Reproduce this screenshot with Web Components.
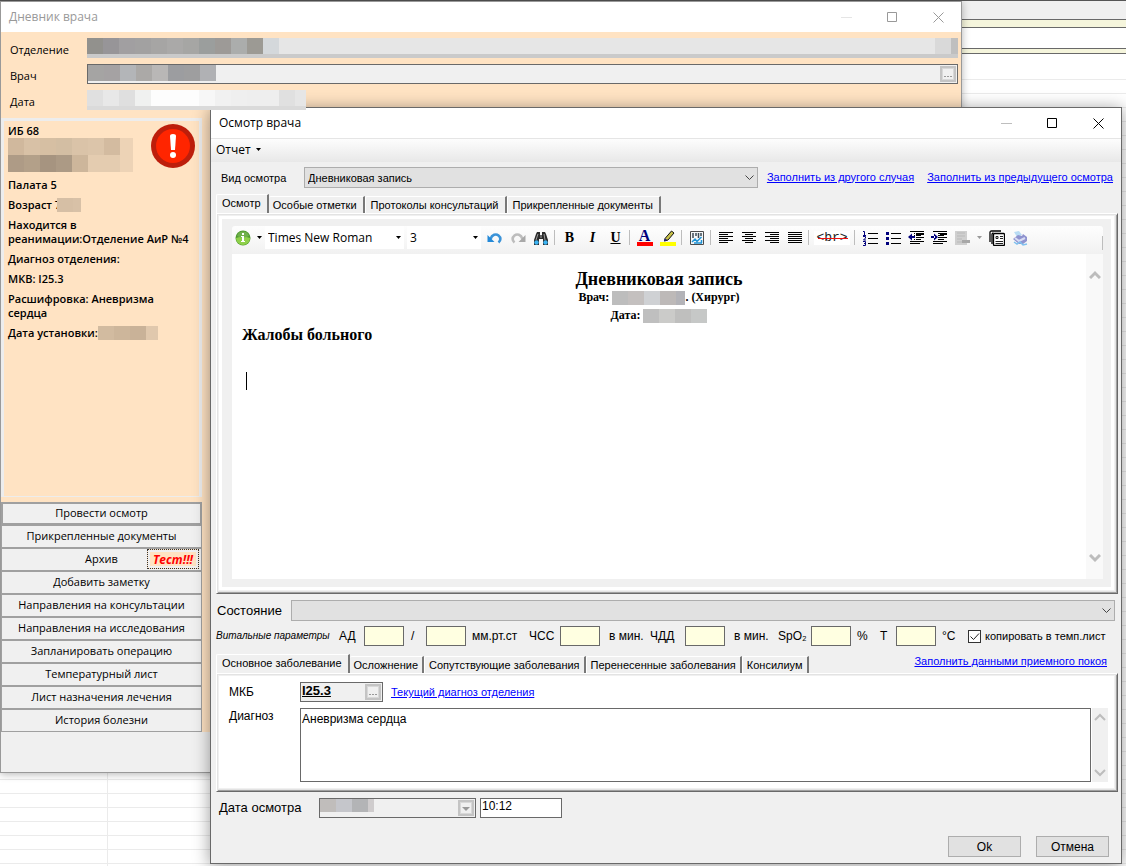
<!DOCTYPE html>
<html lang="ru">
<head>
<meta charset="utf-8">
<title>Осмотр врача</title>
<style>
	:root {
		--font-ui: "Open Sans", "Noto Sans", sans-serif;
		--font-form: "Liberation Sans", Arial, sans-serif;
		--font-doc: "Liberation Serif", "Times New Roman", serif;
		--surface: #f0f0f0;
		--peach: #ffe3c3;
		--line-dark: #696969;
		--line-mid: #a0a0a0;
		--line-soft: #adadad;
		--link: #0000ff;
	}
	html, body { height: 100%; margin: 0; }
	body { overflow: hidden; color: #000; }
</style>
</head>
<body>
<work-desk>
	<diary-window></diary-window>
	<exam-window></exam-window>
</work-desk>

<script>
const define = (name, html, setup) => {
	const template = document.createElement('template');
	template.innerHTML = html;
	customElements.define(name, class extends HTMLElement {
		constructor() {
			super();
			this.attachShadow({ mode: 'open' }).appendChild(template.content.cloneNode(true));
		}
		connectedCallback() {
			if (setup && !this.ready) {
				this.ready = true;
				setup(this, this.shadowRoot);
			}
		}
	});
};

const icons = {
	info: `<circle cx="8" cy="8" r="7.5" fill="#4e9a2e"/><path d="M1 8a7 7 0 0 0 14 0q-7-3-14 0z" fill="#8fd04a"/><path d="M2 6a6.3 6.3 0 0 1 12 0q-6 3-12 0z" fill="#6fb04c"/><rect x="7" y="3" width="2" height="2" fill="#fff"/><path d="M6 6h3v5h1v1H6v-1h1V7H6z" fill="#fff"/>`,
	undo: `<path d="M3.500 9C5 4.500 9 3.500 11.500 5.500s2.500 5 0 7" fill="none" stroke="#3b93d8" stroke-width="2.600"/><path d="M.5 5v7h7z" fill="#2489d8"/>`,
	redo: `<path d="M12.500 9C11 4.500 7 3.500 4.500 5.500s-2.500 5 0 7" fill="none" stroke="#bdbdbd" stroke-width="2.600"/><path d="M15.500 5v7h-7z" fill="#a9a9a9"/>`,
	find: `<path d="M4 2h3v3h2V2h3l1 2 2 6v5h-5V9H6v6H1v-5l2-6z" fill="#2b2b2b"/><path d="M5 4L3 10M11 4l1 6" stroke="#9a9a9a"/><circle cx="3.500" cy="12.500" r="2.200" fill="#3bb3f2"/><circle cx="12.500" cy="12.500" r="2.200" fill="#3bb3f2"/><path d="M7 5h2v3H7z" fill="#666"/>`,
	pen: `<path d="M5 8.500L11.500 1l2.500 2L8 10 4.500 11z" fill="#c9c24a" stroke="#111"/><path d="M4 11.500l1-3 2.500 1.500z" fill="#222080"/><path d="M0 12h16v4H0z" fill="#ff0"/>`,
	chart: `<path d="M1.500 1.500h13v13h-13z" fill="#f4f6f7" stroke="#4c4c4c"/><path d="M4 3v5M7 3v3M9.500 3v5M12 3v3" stroke="#3c4a55" stroke-width="1.500"/><path d="M3 12l3-3 2 2.500L12.500 7M12.500 10v3M5 13h8" fill="none" stroke="#1f93d6" stroke-width="1.500"/>`,
	left: `<path d="M1 2.500h14M1 4.500h9M1 6.500h14M1 8.500h9M1 10.500h14M1 12.500h9" stroke="#000"/>`,
	center: `<path d="M1 2.500h14M4 4.500h8M1 6.500h14M4 8.500h8M1 10.500h14M4 12.500h8" stroke="#000"/>`,
	right: `<path d="M1 2.500h14M6 4.500h9M1 6.500h14M6 8.500h9M1 10.500h14M6 12.500h9" stroke="#000"/>`,
	justify: `<path d="M1 2.500h14M1 4.500h14M1 6.500h14M1 8.500h14M1 10.500h14M1 12.500h14" stroke="#000"/>`,
	numbers: `<path d="M6 3.500h10M6 8.500h10M6 13.500h10" stroke="#000"/><path d="M1 1.500h1.500V5M1 5.500h3M1 6.500h2.500v1.500L1.500 10h2.500M1 11.500h2.500v4H1M2 13.500h1" fill="none" stroke="#00007c"/>`,
	bullets: `<path d="M6 3.500h10M6 8.500h10M6 13.500h10" stroke="#000"/><path d="M1 2h3v3H1zM1 7h3v3H1zM1 12h3v3H1z" fill="#00007c"/>`,
	outdent: `<path d="M2 1.500h14M8 3.500h8M8 5.500h5M8 7.500h8M8 9.500h5M2 11.500h14M2 13.500h10" stroke="#000"/><path d="M6.500 3v11" stroke="#000" stroke-dasharray="1 1"/><path d="M8 3h8v2H8zM8 7h5v1H8z"/><path d="M0 7l4-3.500v7zM3 6h4v2H3z" fill="#00007c"/>`,
	indent: `<path d="M2 1.500h14M8 3.500h8M8 5.500h5M8 7.500h8M8 9.500h5M2 11.500h14M2 13.500h10" stroke="#000"/><path d="M7.500 3v11" stroke="#000" stroke-dasharray="1 1"/><path d="M9 3h7v2H9zM9 7h4v1H9z"/><path d="M7 7L3 3.500v7zM0 6h4v2H0z" fill="#00007c"/>`,
	doc: `<path d="M1 1h12v14H1z" fill="#cfcfcf"/><path d="M3 3h8M3 6h8M3 9h5M3 12h5" stroke="#b9b9b9"/><path d="M8 10h8v3H8z" fill="#a8a8a8"/>`,
	copy: `<path d="M1 12V2.500Q1 1 2.500 1H12M3 14V4.500Q3 3 4.500 3" fill="none" stroke="#000" stroke-width="1.300"/><rect x="4.500" y="3.500" width="11" height="12" rx="1" fill="#fff" stroke="#000" stroke-width="1.300"/><path d="M7 6.500h2v2H7zM11 6.500h3M11 8.500h3M6.500 11.500H14M6.500 13.500H14" fill="none" stroke="#222"/>`,
	print: `<path d="M2 2l5-1 3 4-5 2z" fill="#b9dcf4"/><path d="M1 9l5-4 4 1 1-2 4 3v4l-4 3H7z" fill="#8f93cf"/><path d="M3 8l4 3 6-3" fill="none" stroke="#d9dcf4" stroke-width="2"/><path d="M2 12l3 2 3-2 3 3 4-1" fill="none" stroke="#7fc0ee" stroke-width="1.500"/>`
};

/* Row (or rows) of flat 16px cells that hides personal data */
define('blur-cells', `
	<style>
		:host { display: inline-block; vertical-align: middle; }
		div { display: flex; height: var(--cell-h, 16px); }
		i { width: 16px; }
		i:last-child { width: var(--last, 16px); }
	</style>
`, (el, root) => {
	el.getAttribute('colors').split('/').forEach(line => {
		const row = document.createElement('div');
		line.trim().split(' ').forEach(color => {
			const cell = document.createElement('i');
			cell.style.background = color;
			row.appendChild(cell);
		});
		root.appendChild(row);
	});
});

define('win-frame', `
	<style>
		:host {
			display: flex;
			flex-direction: column;
			box-sizing: border-box;
			border: 1px solid var(--line-dark);
			background: var(--surface);
		}
		header {
			display: flex;
			align-items: center;
			height: 30px;
			padding-left: 8px;
			background: #fff;
			font: 12px/16px var(--font-ui);
			color: var(--title-color, #000);
		}
		h1 { flex: 1; margin: 0; font: inherit; }
		button {
			display: grid;
			place-items: center;
			width: 46px;
			height: 30px;
			padding: 0;
			border: 0;
			background: none;
			color: inherit;
		}
		svg { width: 11px; height: 11px; fill: none; stroke: currentColor; }
		.min { opacity: .25; }
	</style>
	<header>
		<h1></h1>
		<button class="min" aria-label="Свернуть"><svg><path d="M0 5.500h11"/></svg></button>
		<button aria-label="Развернуть"><svg><path d="M.5.5h9v9h-9z"/></svg></button>
		<button aria-label="Закрыть"><svg><path d="M.5.5l10 10M10.500.5l-10 10"/></svg></button>
	</header>
	<slot></slot>
`, (el, root) => {
	root.querySelector('h1').textContent = el.getAttribute('caption');
});

/* Small grey square button inside read-only fields */
define('pick-button', `
	<style>
		:host { display: block; }
		button {
			display: grid;
			place-items: center;
			box-sizing: border-box;
			width: 16px;
			height: 16px;
			padding: 0;
			border: 2px solid #c4c4c4;
			outline: 1px solid #d8d8d8;
			outline-offset: -3px;
			background: var(--surface);
			color: var(--line-mid);
		}
	</style>
	<button aria-label="Выбрать"><svg width="10" height="10"></svg></button>
`, (el, root) => {
	root.querySelector('svg').innerHTML = el.hasAttribute('arrow')
		? '<path d="M1 4h8L5 8z" fill="#999"/>'
		: '<path d="M1 7h2v1H1zM4 7h2v1H4zM7 7h2v1H7z" fill="#999"/>';
});

define('labeled-select', `
	<style>
		:host {
			display: flex;
			align-items: center;
			font: var(--label-size, 11px)/14px var(--font-form);
		}
		label { width: var(--label-width, 83px); padding-left: var(--label-pad, 5px); box-sizing: border-box; }
		div { display: grid; flex: 1; align-items: center; }
		select, svg { grid-area: 1 / 1; }
		select {
			appearance: none;
			width: 100%;
			height: 21px;
			padding: 0 20px 0 3px;
			border: 1px solid var(--line-soft);
			border-radius: 0;
			background: #e1e1e1;
			color: #000;
			font: 11px/14px var(--font-form);
		}
		svg { justify-self: end; margin-right: 4px; pointer-events: none; }
	</style>
	<label for="list"></label>
	<div>
		<select id="list"><option></option></select>
		<svg width="9" height="6"><path d="M.5.5l4 4 4-4" fill="none" stroke="#444"/></svg>
	</div>
`, (el, root) => {
	root.querySelector('label').textContent = el.getAttribute('label');
	root.querySelector('option').textContent = el.getAttribute('value');
});

define('tab-set', `
	<style>
		:host { display: flex; flex-direction: column; }
		.strip { display: flex; align-items: flex-end; height: 19px; }
		.tabs { display: contents; }
		[role=tab] {
			height: 17px;
			padding: 0 var(--tab-end, 6px) 0 var(--tab-start, 5px);
			border: 0;
			border-top: 1px solid #fff;
			border-left: 1px solid #fff;
			border-right: 2px solid #787878;
			border-radius: 2px 0 0 0;
			background: var(--surface);
			color: #000;
			font: 11px/15px var(--font-form);
			white-space: nowrap;
		}
		[role=tab][aria-selected=true] { height: 20px; margin-bottom: -1px; padding: 0 6px 3px 5px; }
		[role=tab][aria-selected=true] + [role=tab] { padding-left: 4px; border-left: 0; }
		.aside { flex: 1; align-self: flex-start; text-align: right; padding-right: 11px; font: 11px/14px var(--font-form); }
		.page {
			display: flex;
			flex: 1;
			flex-direction: column;
			min-height: 0;
			box-sizing: border-box;
			border: 1px solid #fff;
			border-right: 1px solid var(--line-dark);
			border-bottom: 1px solid var(--line-dark);
			box-shadow: inset 1px 1px #e3e3e3, inset -1px -1px var(--line-mid), inset -2px -2px #e3e3e3;
			padding: 2px 3px 3px 2px;
		}
		.page > div { display: flex; flex: 1; flex-direction: column; min-height: 0; background: #fff; }
	</style>
	<div class="strip"><div class="tabs" role="tablist"></div><div class="aside"><slot name="aside"></slot></div></div>
	<div class="page" role="tabpanel"><div><slot></slot></div></div>
`, (el, root) => {
	const list = root.querySelector('.tabs');
	el.getAttribute('tabs').split('|').forEach((text, i) => {
		const tab = document.createElement('button');
		tab.setAttribute('role', 'tab');
		tab.setAttribute('aria-selected', i === 0);
		tab.textContent = text;
		list.appendChild(tab);
	});
	list.addEventListener('click', e => {
		if (e.target === list) return;
		list.querySelectorAll('button').forEach(tab => tab.setAttribute('aria-selected', tab === e.target));
	});
});

define('scroll-rail', `
	<style>
		:host { display: flex; flex-direction: column; justify-content: space-between; align-items: center; width: 17px; background: var(--rail, #f9f9f9); }
		svg { padding: var(--rail-pad, 16px) 0; fill: none; stroke: #bdbdbd; stroke-width: var(--rail-stroke, 3); }
	</style>
	<svg width="12" height="9"><path d="M1 8l5-5 5 5"/></svg>
	<svg width="12" height="9"><path d="M1 1l5 5 5-5"/></svg>
`);

define('editor-toolbar', `
	<style>
		:host {
			display: flex;
			align-items: center;
			height: 23px;
			padding-bottom: 5px;
			border-radius: 3px;
			background: linear-gradient(#fefefe, #f1f1f1);
		}
		button {
			display: grid;
			place-items: center;
			flex: none;
			width: 23px;
			height: 22px;
			padding: 0;
			border: 0;
			background: none;
			color: #000;
			font: bold 14px/16px var(--font-doc);
		}
		.first { width: 21px; }
		.drop { width: 12px; }
		.br { width: 40px; font: 13px/14px "Liberation Mono", monospace; }
		.br span { position: relative; padding: 0 2px; background: #fff; color: #222; }
		.br span::after { content: ""; position: absolute; left: 4px; right: 2px; top: 7px; height: 1px; background: #f01010; }
		.color { color: #00007c; font-size: 16px; line-height: 12px; }
		.color span { width: 16px; border-bottom: 4px solid #f00; }
		i.sep { flex: none; width: 1px; height: 15px; margin: 0 3px 0 2px; background: #bdbdbd; }
		.combo { display: grid; align-items: center; height: 23px; margin-right: 3px; background: #fff; }
		.combo.font { width: 139px; }
		.combo.size { width: 74px; margin-right: 2px; }
		.combo > * { grid-area: 1 / 1; }
		select { appearance: none; height: 23px; padding: 0 14px 0 3px; border: 0; background: none; color: #000; font: 12px/16px var(--font-ui); }
		.combo svg { justify-self: end; margin-right: 3px; pointer-events: none; }
		.end { width: 1px; height: 14px; margin: 10px 0 0 auto; background: #bdbdbd; }
	</style>
	<button class="first" data-icon="info" title="Информация"></button>
	<button class="drop" aria-label="Меню информации"><svg width="5" height="3"><path d="M0 0h5L2.500 3z"/></svg></button>
	<div class="combo font">
		<select aria-label="Шрифт"><option>Times New Roman</option></select>
		<svg width="5" height="3"><path d="M0 0h5L2.500 3z"/></svg>
	</div>
	<div class="combo size">
		<select aria-label="Размер"><option>3</option></select>
		<svg width="5" height="3"><path d="M0 0h5L2.500 3z"/></svg>
	</div>
	<button data-icon="undo" title="Отменить"></button>
	<button data-icon="redo" title="Вернуть"></button>
	<button data-icon="find" title="Найти"></button>
	<i class="sep"></i>
	<button>B</button>
	<button><em>I</em></button>
	<button><u>U</u></button>
	<i class="sep"></i>
	<button class="color" title="Цвет текста"><span>A</span></button>
	<button data-icon="pen" title="Цвет фона"></button>
	<i class="sep"></i>
	<button data-icon="chart" title="Изображение"></button>
	<i class="sep"></i>
	<button data-icon="left" title="По левому краю"></button>
	<button data-icon="center" title="По центру"></button>
	<button data-icon="right" title="По правому краю"></button>
	<button data-icon="justify" title="По ширине"></button>
	<i class="sep"></i>
	<button class="br"><span>&lt;br&gt;</span></button>
	<i class="sep"></i>
	<button data-icon="numbers" title="Нумерация"></button>
	<button data-icon="bullets" title="Маркеры"></button>
	<button data-icon="outdent" title="Уменьшить отступ"></button>
	<button data-icon="indent" title="Увеличить отступ"></button>
	<button data-icon="doc" title="Вставить"></button>
	<button class="drop" aria-label="Меню вставки"><svg width="5" height="3"><path d="M0 0h5L2.500 3z" fill="#999"/></svg></button>
	<button data-icon="copy" title="Копировать"></button>
	<button data-icon="print" title="Печать"></button>
	<i class="end"></i>
`, (el, root) => {
	root.querySelectorAll('[data-icon]').forEach(btn => {
		btn.innerHTML = `<svg width="16" height="16">${icons[btn.dataset.icon]}</svg>`;
	});
});

define('note-editor', `
	<style>
		:host { display: flex; flex: 1; flex-direction: column; min-height: 0; margin: 3px; padding: 7px 8px 8px 10px; background: var(--surface); }
		.area { display: flex; flex: 1; min-height: 0; background: #fff; }
		article { flex: 1; padding: 16px 10px 0; font: bold 12px/18px var(--font-doc); outline: 0; }
		h2, h3, p { margin: 0; text-align: center; }
		h2 { font-size: 18px; line-height: 18px; }
		h3 { margin-top: 2px; text-align: left; font-size: 16px; line-height: 18px; }
		.caret { width: 1px; height: 18px; margin: 28px 0 0 4px; background: #000; }
	</style>
	<editor-toolbar></editor-toolbar>
	<div class="area">
		<article>
			<h2>Дневниковая запись</h2>
			<p>Врач: <blur-cells style="--cell-h: 14px; --last: 9px" colors="#bdbdbd #c4c0bf #cfd1d4 #bdb9b8 #b3b3b8"></blur-cells>. (Хирург)</p>
			<p>Дата: <blur-cells style="--cell-h: 14px" colors="#bfbfbf #cbcbc9 #bfbfbe #c6c8c7"></blur-cells></p>
			<h3>Жалобы больного</h3>
			<div class="caret"></div>
		</article>
		<scroll-rail></scroll-rail>
	</div>
`);

define('vital-signs', `
	<style>
		:host {
			display: grid;
			grid-template-columns: 123px 25px 40px 22px 46px 57px 31px 49px 41px 35px 49px 44px 33px 46px 23px 16px 46px 26px auto;
			align-items: center;
			height: 20px;
			font: 12px/14px var(--font-form);
			white-space: nowrap;
		}
		em { font-size: 10px; }
		input:not([type]) { box-sizing: border-box; width: 40px; height: 20px; padding: 0 2px; border: 1px solid var(--line-dark); background: #ffffe1; font: inherit; }
		.slash { padding-left: 7px; }
		.copy { display: flex; align-items: center; gap: 4px; font-size: 11px; }
		.box { display: grid; }
		.box > * { grid-area: 1 / 1; }
		input[type=checkbox] { appearance: none; width: 13px; height: 13px; margin: 0; border: 1px solid #333; background: #fff; }
		svg { pointer-events: none; fill: none; stroke: #222; visibility: hidden; }
		:checked + svg { visibility: visible; }
	</style>
	<em>Витальные параметры</em>
	<label for="ad">АД</label><input id="ad">
	<label for="ad2" class="slash">/</label><input id="ad2">
	<span>мм.рт.ст</span>
	<label for="hr">ЧСС</label><input id="hr">
	<span>в мин.</span>
	<label for="rr">ЧДД</label><input id="rr">
	<span>в мин.</span>
	<label for="sp">SpO₂</label><input id="sp">
	<span>%</span>
	<label for="t">T</label><input id="t">
	<span>°C</span>
	<label class="copy"><span class="box"><input type="checkbox" checked><svg width="13" height="13"><path d="M2.500 6.500l3 3 5.500-6"/></svg></span>копировать в темп.лист</label>
`);

define('diagnosis-form', `
	<style>
		:host {
			display: grid;
			grid-template-columns: 72px 1fr;
			row-gap: 6px;
			padding: 6px 6px 6px 9px;
			font: 12px/16px var(--font-form);
		}
		label { padding-left: 1px; }
		.line { display: flex; align-items: center; gap: 8px; min-height: 20px; }
		.code { display: flex; align-items: center; box-sizing: border-box; width: 83px; height: 20px; padding-right: 1px; border: 1px solid var(--line-dark); background: var(--surface); }
		.code input { flex: 1; min-width: 0; height: 18px; padding: 0 1px 3px; box-sizing: border-box; border: 0; background: none; font: bold 13px/15px var(--font-form); text-decoration: underline; }
		a { color: var(--link); font-size: 11px; }
		.text { display: flex; gap: 1px; height: 74px; }
		textarea { flex: 1; box-sizing: border-box; margin: 0; padding: 2px 1px; border: 1px solid var(--line-dark); resize: none; overflow: hidden; font: 12px/16px var(--font-form); color: #000; }
		scroll-rail { width: 16px; --rail: #f0f0f0; --rail-pad: 4px; --rail-stroke: 2; }
	</style>
	<label class="line" for="mkb">МКБ</label>
	<div class="line">
		<span class="code"><input id="mkb" value="I25.3" readonly><pick-button></pick-button></span>
		<a href="#">Текущий диагноз отделения</a>
	</div>
	<label for="diag">Диагноз</label>
	<div class="text"><textarea id="diag">Аневризма сердца</textarea><scroll-rail></scroll-rail></div>
`);

define('exam-window', `
	<style>
		:host { position: absolute; z-index: 1; left: 210px; right: 4px; top: 107px; bottom: 2px; display: flex; box-shadow: 0 2px 16px rgba(0, 0, 0, .4); }
		win-frame { flex: 1; min-width: 0; }
		nav { height: 23px; border-top: 1px solid #e5e5e5; background: linear-gradient(#fdfdfd, #e8e8e8); }
		nav button { display: flex; align-items: center; gap: 4px; height: 22px; padding: 0 5px; border: 0; background: none; color: #000; font: 12px/16px var(--font-ui); }
		main { display: flex; flex: 1; flex-direction: column; min-height: 0; padding: 5px 3px 6px 5px; }
		.kind { display: flex; align-items: center; margin: 0 5px 6px 0; }
		.kind labeled-select { flex: 1; min-width: 0; --label-width: 88px; }
		.links { display: flex; gap: 13px; margin: 0 0 2px 9px; }
		a { color: var(--link); font: 11px/14px var(--font-form); }
		.notes { flex: 1; min-height: 0; }
		.state { margin: 6px 3px 5px 0; --label-width: 75px; --label-pad: 1px; --label-size: 13px; }
		.diagnosis { margin: 8px 0 6px; --tab-start: 4px; --tab-end: 4px; }
		.date { display: flex; align-items: center; gap: 4px; font: 13px/16px var(--font-form); }
		.date label { width: 96px; padding-left: 3px; }
		.day { display: flex; align-items: center; justify-content: space-between; box-sizing: border-box; width: 157px; height: 20px; padding-right: 1px; border: 1px solid var(--line-dark); }
		.day blur-cells { align-self: flex-start; }
		.date input { box-sizing: border-box; width: 82px; height: 20px; padding: 0 1px 4px; border: 1px solid var(--line-dark); background: #fff; font: 12px/14px var(--font-form); }
		footer { display: flex; justify-content: flex-end; gap: 15px; margin: 18px 9px 0 0; }
		footer button { width: 73px; height: 21px; padding: 0; border: 1px solid var(--line-soft); background: #e1e1e1; color: #000; font: 12px/14px var(--font-form); }
	</style>
	<win-frame caption="Осмотр врача">
		<nav><button>Отчет <svg width="7" height="4"><path d="M1 0h5L3.500 3z"/></svg></button></nav>
		<main>
			<div class="kind">
				<labeled-select label="Вид осмотра" value="Дневниковая запись"></labeled-select>
				<div class="links"><a href="#">Заполнить из другого случая</a><a href="#">Заполнить из предыдущего осмотра</a></div>
			</div>
			<tab-set class="notes" tabs="Осмотр|Особые отметки|Протоколы консультаций|Прикрепленные документы">
				<note-editor></note-editor>
			</tab-set>
			<labeled-select class="state" label="Состояние" value=""></labeled-select>
			<vital-signs></vital-signs>
			<tab-set class="diagnosis" tabs="Основное заболевание|Осложнение|Сопутствующие заболевания|Перенесенные заболевания|Консилиум">
				<a slot="aside" href="#">Заполнить данными приемного покоя</a>
				<diagnosis-form></diagnosis-form>
			</tab-set>
			<div class="date">
				<label for="time">Дата осмотра</label>
				<div class="day"><blur-cells style="--cell-h: 13px; --last: 6px" colors="#c0bdbb #c5c6cb #b3b4b6 #cfcccd"></blur-cells><pick-button arrow></pick-button></div>
				<input id="time" value="10:12">
			</div>
			<footer><button>Ok</button><button>Отмена</button></footer>
		</main>
	</win-frame>
`);

define('patient-card', `
	<style>
		:host { display: block; box-sizing: border-box; padding: 3px 0 3px 4px; border: 3px solid #ededed; border-bottom-width: 1px; background: var(--peach); font: 600 11px/14px var(--font-ui); }
		header { display: flex; justify-content: space-between; height: 48px; margin-bottom: 6px; padding-right: 4px; }
		header svg { flex: none; }
		p { margin: 0 0 6px; }
		blur-cells { vertical-align: top; }
		.age blur-cells { margin-left: -4px; }
	</style>
	<header>
		<div>ИБ 68<br><blur-cells style="--cell-h: 17px; --last: 13px" colors="#d0b89d #d8c1a6 #d6bfa3 #d3bea3 #dac3a8 #dcc5aa #d3bba0 #edd3b6/#ae9b86 #b3a089 #a69480 #ac9a85 #cdb69b #e4ccb0 #e4ccb0 #edd3b6"></blur-cells></div>
		<svg width="44" height="44"><circle cx="22" cy="22" r="22" fill="#bd1e0b"/><circle cx="22" cy="22" r="17" fill="#ff2500"/><path d="M19 12q0-2 3-2t3 2l-1 14h-4z" fill="#fff"/><circle cx="22" cy="31" r="3" fill="#fff"/></svg>
	</header>
	<p>Палата 5</p>
	<p class="age">Возраст 7<blur-cells style="--cell-h: 14px; --last: 8px" colors="#d6bfa5 #d8c1a7"></blur-cells></p>
	<p>Находится в<br>реанимации:Отделение АиР №4</p>
	<p>Диагноз отделения:</p>
	<p>МКВ: I25.3</p>
	<p>Расшифровка: Аневризма<br>сердца</p>
	<p>Дата установки:<blur-cells style="--cell-h: 14px; --last: 12px" colors="#d2bba0 #cdb69b #c9b298 #e0c8ad"></blur-cells></p>
`);

define('action-list', `
	<style>
		:host { display: flex; flex-direction: column; }
		div { display: grid; position: relative; }
		button { height: 23px; padding: 0 0 2px; border: 1px solid var(--line-mid); background: var(--surface); color: #000; font: 11px/14px var(--font-ui); }
		div:first-of-type button { border-width: 2px; }
		mark { position: absolute; right: 3px; top: 1px; padding: 3px 5px 1px; border: 1px dotted #333; background: var(--peach); box-shadow: inset 0 0 0 2px var(--surface); color: #f00; font: italic bold 12px/14px var(--font-ui); }
	</style>
`, (el, root) => {
	['Провести осмотр', 'Прикрепленные документы', 'Архив', 'Добавить заметку', 'Направления на консультации',
		'Направления на исследования', 'Запланировать операцию', 'Температурный лист', 'Лист назначения лечения',
		'История болезни'].forEach(text => {
		const row = document.createElement('div');
		row.innerHTML = `<button>${text}</button>`;
		if (text === 'Архив') row.innerHTML += '<mark>Тест!!!</mark>';
		root.appendChild(row);
	});
});

define('diary-window', `
	<style>
		:host { position: absolute; left: 0; right: 164px; top: 1px; bottom: 93px; display: flex; box-shadow: 0 1px 8px rgba(0, 0, 0, .3); }
		win-frame { flex: 1; min-width: 0; border-color: #999; --title-color: #999; }
		main { display: flex; flex: 1; flex-direction: column; min-height: 0; padding-top: 6px; background: var(--peach); }
		form { display: grid; grid-template-columns: 77px 1fr; gap: 6px 0; padding: 0 3px 8px 9px; font: 11px/16px var(--font-ui); }
		form > * { height: 20px; box-sizing: border-box; }
		label { padding-top: 4px; }
		.field { display: flex; justify-content: space-between; min-width: 0; }
		.dept { border-bottom: 4px solid #cacaca; background: #e6e6e6; }
		.doctor { align-items: center; padding-right: 1px; border: 1px solid var(--line-dark); background: var(--surface); }
		.doctor blur-cells { align-self: flex-start; }
		.date { position: relative; z-index: 2; justify-self: start; border-bottom: 4px solid #dadada; }
		aside { display: flex; flex: 1; flex-direction: column; width: 201px; min-height: 0; }
		patient-card { flex: 1; min-height: 0; margin-bottom: 5px; }
		footer { height: 40px; }
	</style>
	<win-frame caption="Дневник врача">
		<main>
			<form>
				<label>Отделение</label>
				<div class="field dept"><blur-cells colors="#92918d #979598 #a19fa1 #a2a1a1 #a6a5a4 #aaa9a8 #a6a6a4 #9b9e9d #9d9a97 #abadac #9c9a94 #d4d8db"></blur-cells><blur-cells style="--last: 7px" colors="#d9d9d9 #bfbfbf"></blur-cells></div>
				<label>Врач</label>
				<div class="field doctor"><blur-cells colors="#a5a4a3 #a5a2a3 #b3b5b8 #aba9a7 #b9b7b6 #9c9da0 #9e9e9f #b0b1b4"></blur-cells><pick-button></pick-button></div>
				<label>Дата</label>
				<div class="field date"><blur-cells style="--last: 11px" colors="#e0e0e0 #e8e8e8 #dfdfdf #f0f1f0 #fdfdfd #fdfdfd #fdfdfd #f7f7f7 #f1f1f1 #efefef #eeeeee #eeeeee #e0e0e0 #e6e6e6"></blur-cells></div>
			</form>
			<aside>
				<patient-card></patient-card>
				<action-list></action-list>
			</aside>
		</main>
		<footer></footer>
	</win-frame>
`);

define('work-desk', `
	<style>
		:host {
			position: relative;
			display: flex;
			flex-direction: column;
			height: 100%;
			overflow: hidden;
			background: #fff;
		}
		.head { height: 18px; border-top: 1px solid #555; background: var(--surface); }
		.band { height: 7px; border: solid var(--line-dark); border-width: 1px 0; background: #f5f5dc; }
		.band.thin { height: 4px; margin-top: 20px; }
		.grid {
			flex: 1;
			margin-top: 12px;
			background:
				linear-gradient(90deg, transparent 107px, #ebebeb 107px 108px, transparent 108px),
				repeating-linear-gradient(transparent 0 13px, #ebebeb 13px 14px);
		}
	</style>
	<div class="head"></div>
	<div class="band"></div>
	<div class="band thin"></div>
	<div class="grid"></div>
	<slot></slot>
`);
</script>
</body>
</html>
